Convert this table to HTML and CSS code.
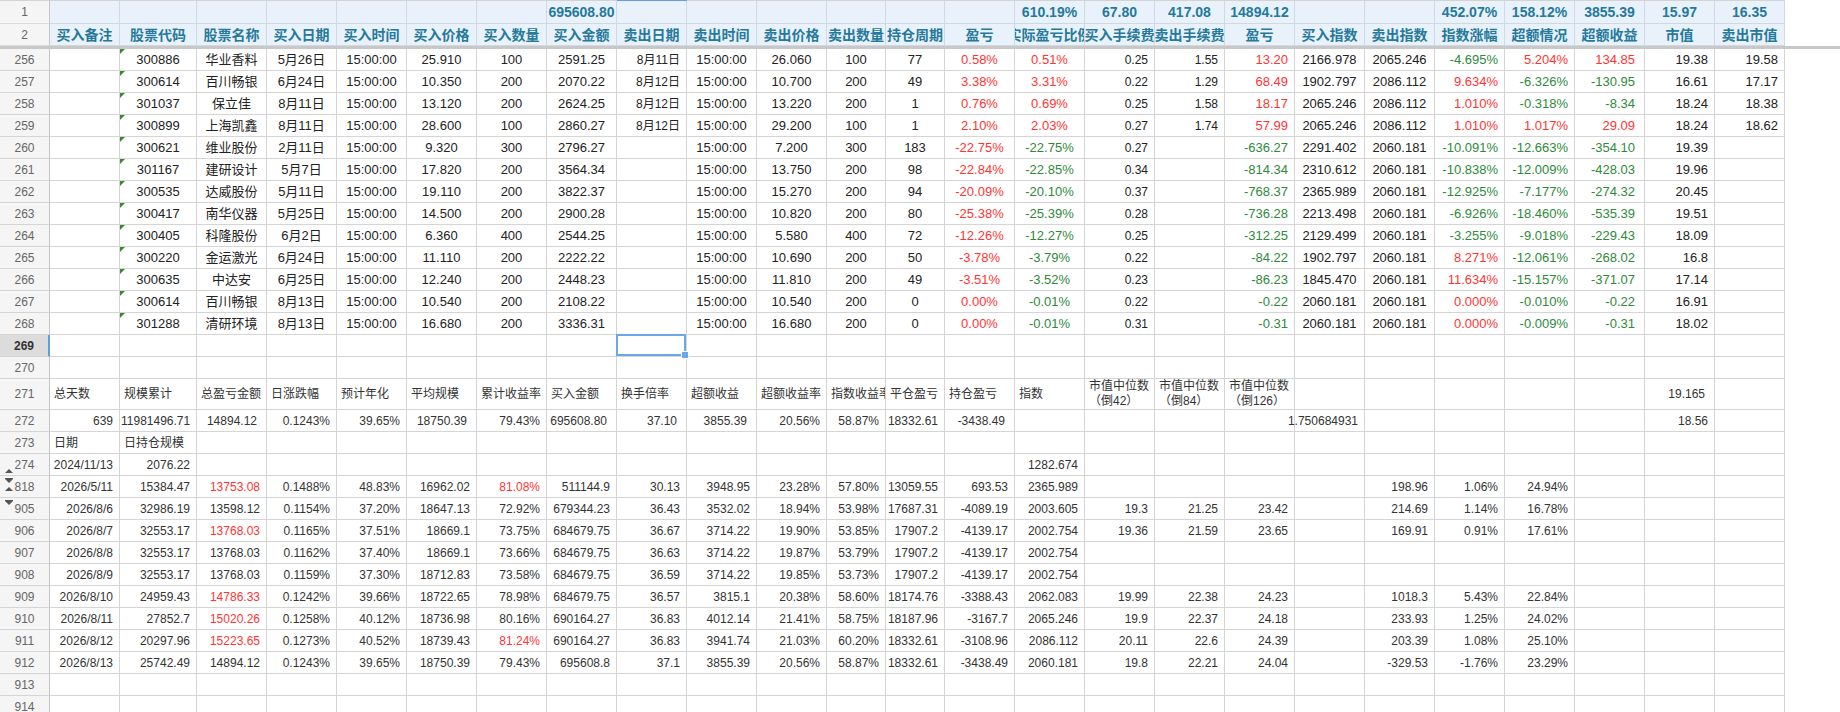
FILE: index.html
```html
<!DOCTYPE html>
<html lang="zh-CN">
<head>
<meta charset="utf-8">
<title>持仓记录</title>
<link rel="stylesheet" href="styles.css">
</head>
<body>
<div class="sheet">
<div class="row topline"><div></div><div></div><div></div><div></div><div></div><div></div><div></div><div></div><div></div><div class="on"></div><div></div><div></div><div></div><div></div><div></div><div></div><div></div><div></div><div></div><div></div><div></div><div></div><div></div><div></div><div></div><div></div></div>
<div class="row hd h1"><div class="rh">1</div><div></div><div></div><div></div><div></div><div></div><div></div><div></div><div>695608.80</div><div></div><div></div><div></div><div></div><div></div><div></div><div>610.19%</div><div>67.80</div><div>417.08</div><div>14894.12</div><div></div><div></div><div>452.07%</div><div>158.12%</div><div>3855.39</div><div>15.97</div><div>16.35</div></div>
<div class="row hd h2"><div class="rh">2</div><div>买入备注</div><div>股票代码</div><div>股票名称</div><div>买入日期</div><div>买入时间</div><div>买入价格</div><div>买入数量</div><div>买入金额</div><div>卖出日期</div><div>卖出时间</div><div>卖出价格</div><div>卖出数量</div><div>持仓周期</div><div>盈亏</div><div>实际盈亏比例</div><div>买入手续费</div><div>卖出手续费</div><div>盈亏</div><div>买入指数</div><div>卖出指数</div><div>指数涨幅</div><div>超额情况</div><div>超额收益</div><div>市值</div><div>卖出市值</div></div>
<div class="band"></div>

<div class="row"><div class="rh">256</div><div></div><div class="mk">300886</div><div>华业香料</div><div>5月26日</div><div>15:00:00</div><div>25.910</div><div>100</div><div>2591.25</div><div class="r s">8月11日</div><div>15:00:00</div><div>26.060</div><div>100</div><div>77</div><div class="red">0.58%</div><div class="red">0.51%</div><div class="r s">0.25</div><div class="r s">1.55</div><div class="r red">13.20</div><div>2166.978</div><div>2065.246</div><div class="r grn">-4.695%</div><div class="r red">5.204%</div><div class="r w red">134.85</div><div class="r">19.38</div><div class="r">19.58</div></div>
<div class="row"><div class="rh">257</div><div></div><div class="mk">300614</div><div>百川畅银</div><div>6月24日</div><div>15:00:00</div><div>10.350</div><div>200</div><div>2070.22</div><div class="r s">8月12日</div><div>15:00:00</div><div>10.700</div><div>200</div><div>49</div><div class="red">3.38%</div><div class="red">3.31%</div><div class="r s">0.22</div><div class="r s">1.29</div><div class="r red">68.49</div><div>1902.797</div><div>2086.112</div><div class="r red">9.634%</div><div class="r grn">-6.326%</div><div class="r w grn">-130.95</div><div class="r">16.61</div><div class="r">17.17</div></div>
<div class="row"><div class="rh">258</div><div></div><div class="mk">301037</div><div>保立佳</div><div>8月11日</div><div>15:00:00</div><div>13.120</div><div>200</div><div>2624.25</div><div class="r s">8月12日</div><div>15:00:00</div><div>13.220</div><div>200</div><div>1</div><div class="red">0.76%</div><div class="red">0.69%</div><div class="r s">0.25</div><div class="r s">1.58</div><div class="r red">18.17</div><div>2065.246</div><div>2086.112</div><div class="r red">1.010%</div><div class="r grn">-0.318%</div><div class="r w grn">-8.34</div><div class="r">18.24</div><div class="r">18.38</div></div>
<div class="row"><div class="rh">259</div><div></div><div class="mk">300899</div><div>上海凯鑫</div><div>8月11日</div><div>15:00:00</div><div>28.600</div><div>100</div><div>2860.27</div><div class="r s">8月12日</div><div>15:00:00</div><div>29.200</div><div>100</div><div>1</div><div class="red">2.10%</div><div class="red">2.03%</div><div class="r s">0.27</div><div class="r s">1.74</div><div class="r red">57.99</div><div>2065.246</div><div>2086.112</div><div class="r red">1.010%</div><div class="r red">1.017%</div><div class="r w red">29.09</div><div class="r">18.24</div><div class="r">18.62</div></div>
<div class="row"><div class="rh">260</div><div></div><div class="mk">300621</div><div>维业股份</div><div>2月11日</div><div>15:00:00</div><div>9.320</div><div>300</div><div>2796.27</div><div></div><div>15:00:00</div><div>7.200</div><div>300</div><div>183</div><div class="red">-22.75%</div><div class="grn">-22.75%</div><div class="r s">0.27</div><div></div><div class="r grn">-636.27</div><div>2291.402</div><div>2060.181</div><div class="r grn">-10.091%</div><div class="r grn">-12.663%</div><div class="r w grn">-354.10</div><div class="r">19.39</div><div></div></div>
<div class="row"><div class="rh">261</div><div></div><div class="mk">301167</div><div>建研设计</div><div>5月7日</div><div>15:00:00</div><div>17.820</div><div>200</div><div>3564.34</div><div></div><div>15:00:00</div><div>13.750</div><div>200</div><div>98</div><div class="red">-22.84%</div><div class="grn">-22.85%</div><div class="r s">0.34</div><div></div><div class="r grn">-814.34</div><div>2310.612</div><div>2060.181</div><div class="r grn">-10.838%</div><div class="r grn">-12.009%</div><div class="r w grn">-428.03</div><div class="r">19.96</div><div></div></div>
<div class="row"><div class="rh">262</div><div></div><div class="mk">300535</div><div>达威股份</div><div>5月11日</div><div>15:00:00</div><div>19.110</div><div>200</div><div>3822.37</div><div></div><div>15:00:00</div><div>15.270</div><div>200</div><div>94</div><div class="red">-20.09%</div><div class="grn">-20.10%</div><div class="r s">0.37</div><div></div><div class="r grn">-768.37</div><div>2365.989</div><div>2060.181</div><div class="r grn">-12.925%</div><div class="r grn">-7.177%</div><div class="r w grn">-274.32</div><div class="r">20.45</div><div></div></div>
<div class="row"><div class="rh">263</div><div></div><div class="mk">300417</div><div>南华仪器</div><div>5月25日</div><div>15:00:00</div><div>14.500</div><div>200</div><div>2900.28</div><div></div><div>15:00:00</div><div>10.820</div><div>200</div><div>80</div><div class="red">-25.38%</div><div class="grn">-25.39%</div><div class="r s">0.28</div><div></div><div class="r grn">-736.28</div><div>2213.498</div><div>2060.181</div><div class="r grn">-6.926%</div><div class="r grn">-18.460%</div><div class="r w grn">-535.39</div><div class="r">19.51</div><div></div></div>
<div class="row"><div class="rh">264</div><div></div><div class="mk">300405</div><div>科隆股份</div><div>6月2日</div><div>15:00:00</div><div>6.360</div><div>400</div><div>2544.25</div><div></div><div>15:00:00</div><div>5.580</div><div>400</div><div>72</div><div class="red">-12.26%</div><div class="grn">-12.27%</div><div class="r s">0.25</div><div></div><div class="r grn">-312.25</div><div>2129.499</div><div>2060.181</div><div class="r grn">-3.255%</div><div class="r grn">-9.018%</div><div class="r w grn">-229.43</div><div class="r">18.09</div><div></div></div>
<div class="row"><div class="rh">265</div><div></div><div class="mk">300220</div><div>金运激光</div><div>6月24日</div><div>15:00:00</div><div>11.110</div><div>200</div><div>2222.22</div><div></div><div>15:00:00</div><div>10.690</div><div>200</div><div>50</div><div class="red">-3.78%</div><div class="grn">-3.79%</div><div class="r s">0.22</div><div></div><div class="r grn">-84.22</div><div>1902.797</div><div>2060.181</div><div class="r red">8.271%</div><div class="r grn">-12.061%</div><div class="r w grn">-268.02</div><div class="r">16.8</div><div></div></div>
<div class="row"><div class="rh">266</div><div></div><div class="mk">300635</div><div>中达安</div><div>6月25日</div><div>15:00:00</div><div>12.240</div><div>200</div><div>2448.23</div><div></div><div>15:00:00</div><div>11.810</div><div>200</div><div>49</div><div class="red">-3.51%</div><div class="grn">-3.52%</div><div class="r s">0.23</div><div></div><div class="r grn">-86.23</div><div>1845.470</div><div>2060.181</div><div class="r red">11.634%</div><div class="r grn">-15.157%</div><div class="r w grn">-371.07</div><div class="r">17.14</div><div></div></div>
<div class="row"><div class="rh">267</div><div></div><div class="mk">300614</div><div>百川畅银</div><div>8月13日</div><div>15:00:00</div><div>10.540</div><div>200</div><div>2108.22</div><div></div><div>15:00:00</div><div>10.540</div><div>200</div><div>0</div><div class="red">0.00%</div><div class="grn">-0.01%</div><div class="r s">0.22</div><div></div><div class="r grn">-0.22</div><div>2060.181</div><div>2060.181</div><div class="r red">0.000%</div><div class="r grn">-0.010%</div><div class="r w grn">-0.22</div><div class="r">16.91</div><div></div></div>
<div class="row"><div class="rh">268</div><div></div><div class="mk">301288</div><div>清研环境</div><div>8月13日</div><div>15:00:00</div><div>16.680</div><div>200</div><div>3336.31</div><div></div><div>15:00:00</div><div>16.680</div><div>200</div><div>0</div><div class="red">0.00%</div><div class="grn">-0.01%</div><div class="r s">0.31</div><div></div><div class="r grn">-0.31</div><div>2060.181</div><div>2060.181</div><div class="r red">0.000%</div><div class="r grn">-0.009%</div><div class="r w grn">-0.31</div><div class="r">18.02</div><div></div></div>
<div class="row lo"><div class="rh cur">269</div><div></div><div></div><div></div><div></div><div></div><div></div><div></div><div></div><div class="sel"></div><div></div><div></div><div></div><div></div><div></div><div></div><div></div><div></div><div></div><div></div><div></div><div></div><div></div><div></div><div></div><div></div></div>
<div class="row lo"><div class="rh">270</div><div></div><div></div><div></div><div></div><div></div><div></div><div></div><div></div><div></div><div></div><div></div><div></div><div></div><div></div><div></div><div></div><div></div><div></div><div></div><div></div><div></div><div></div><div></div><div></div><div></div></div>
<div class="row lo tall"><div class="rh">271</div><div class="l">总天数</div><div class="l">规模累计</div><div class="l">总盈亏金额</div><div class="l">日涨跌幅</div><div class="l">预计年化</div><div class="l">平均规模</div><div class="l">累计收益率</div><div class="l">买入金额</div><div class="l">换手倍率</div><div class="l">超额收益</div><div class="l">超额收益率</div><div class="l">指数收益率</div><div class="l">平仓盈亏</div><div class="l">持仓盈亏</div><div class="l">指数</div><div class="l two">市值中位数<br>（倒42）</div><div class="l two">市值中位数<br>（倒84）</div><div class="l two">市值中位数<br>（倒126）</div><div></div><div></div><div></div><div></div><div></div><div class="p10">19.165</div><div></div></div>
<div class="row lo"><div class="rh">272</div><div>639</div><div class="ov">11981496.71</div><div class="p10">14894.12</div><div>0.1243%</div><div>39.65%</div><div class="p10">18750.39</div><div>79.43%</div><div class="p10">695608.80</div><div class="p10">37.10</div><div class="p10">3855.39</div><div>20.56%</div><div>58.87%</div><div>18332.61</div><div class="p10">-3438.49</div><div></div><div></div><div></div><div></div><div class="spill">1.750684931</div><div></div><div></div><div></div><div></div><div>18.56</div><div></div></div>
<div class="row lo"><div class="rh">273</div><div class="l">日期</div><div class="l">日持仓规模</div><div></div><div></div><div></div><div></div><div></div><div></div><div></div><div></div><div></div><div></div><div></div><div></div><div></div><div></div><div></div><div></div><div></div><div></div><div></div><div></div><div></div><div></div><div></div></div>
<div class="row lo"><div class="rh"><span class="up g274"></span>274</div><div>2024/11/13</div><div>2076.22</div><div></div><div></div><div></div><div></div><div></div><div></div><div></div><div></div><div></div><div></div><div></div><div></div><div>1282.674</div><div></div><div></div><div></div><div></div><div></div><div></div><div></div><div></div><div></div><div></div></div>
<div class="row lo"><div class="rh"><span class="bar b818"></span><span class="dn d818"></span><span class="up u818"></span>818</div><div>2026/5/11</div><div>15384.47</div><div class="red">13753.08</div><div>0.1488%</div><div>48.83%</div><div>16962.02</div><div class="red">81.08%</div><div>511144.9</div><div>30.13</div><div>3948.95</div><div>23.28%</div><div>57.80%</div><div>13059.55</div><div>693.53</div><div>2365.989</div><div></div><div></div><div></div><div></div><div>198.96</div><div>1.06%</div><div>24.94%</div><div></div><div></div><div></div></div>
<div class="row lo"><div class="rh"><span class="bar b905"></span><span class="dn d905"></span>905</div><div>2026/8/6</div><div>32986.19</div><div>13598.12</div><div>0.1154%</div><div>37.20%</div><div>18647.13</div><div>72.92%</div><div>679344.23</div><div>36.43</div><div>3532.02</div><div>18.94%</div><div>53.98%</div><div>17687.31</div><div>-4089.19</div><div>2003.605</div><div>19.3</div><div>21.25</div><div>23.42</div><div></div><div>214.69</div><div>1.14%</div><div>16.78%</div><div></div><div></div><div></div></div>
<div class="row lo"><div class="rh">906</div><div>2026/8/7</div><div>32553.17</div><div class="red">13768.03</div><div>0.1165%</div><div>37.51%</div><div>18669.1</div><div>73.75%</div><div>684679.75</div><div>36.67</div><div>3714.22</div><div>19.90%</div><div>53.85%</div><div>17907.2</div><div>-4139.17</div><div>2002.754</div><div>19.36</div><div>21.59</div><div>23.65</div><div></div><div>169.91</div><div>0.91%</div><div>17.61%</div><div></div><div></div><div></div></div>
<div class="row lo"><div class="rh">907</div><div>2026/8/8</div><div>32553.17</div><div>13768.03</div><div>0.1162%</div><div>37.40%</div><div>18669.1</div><div>73.66%</div><div>684679.75</div><div>36.63</div><div>3714.22</div><div>19.87%</div><div>53.79%</div><div>17907.2</div><div>-4139.17</div><div>2002.754</div><div></div><div></div><div></div><div></div><div></div><div></div><div></div><div></div><div></div><div></div></div>
<div class="row lo"><div class="rh">908</div><div>2026/8/9</div><div>32553.17</div><div>13768.03</div><div>0.1159%</div><div>37.30%</div><div>18712.83</div><div>73.58%</div><div>684679.75</div><div>36.59</div><div>3714.22</div><div>19.85%</div><div>53.73%</div><div>17907.2</div><div>-4139.17</div><div>2002.754</div><div></div><div></div><div></div><div></div><div></div><div></div><div></div><div></div><div></div><div></div></div>
<div class="row lo"><div class="rh">909</div><div>2026/8/10</div><div>24959.43</div><div class="red">14786.33</div><div>0.1242%</div><div>39.66%</div><div>18722.65</div><div>78.98%</div><div>684679.75</div><div>36.57</div><div>3815.1</div><div>20.38%</div><div>58.60%</div><div>18174.76</div><div>-3388.43</div><div>2062.083</div><div>19.99</div><div>22.38</div><div>24.23</div><div></div><div>1018.3</div><div>5.43%</div><div>22.84%</div><div></div><div></div><div></div></div>
<div class="row lo"><div class="rh">910</div><div>2026/8/11</div><div>27852.7</div><div class="red">15020.26</div><div>0.1258%</div><div>40.12%</div><div>18736.98</div><div>80.16%</div><div>690164.27</div><div>36.83</div><div>4012.14</div><div>21.41%</div><div>58.75%</div><div>18187.96</div><div>-3167.7</div><div>2065.246</div><div>19.9</div><div>22.37</div><div>24.18</div><div></div><div>233.93</div><div>1.25%</div><div>24.02%</div><div></div><div></div><div></div></div>
<div class="row lo"><div class="rh">911</div><div>2026/8/12</div><div>20297.96</div><div class="red">15223.65</div><div>0.1273%</div><div>40.52%</div><div>18739.43</div><div class="red">81.24%</div><div>690164.27</div><div>36.83</div><div>3941.74</div><div>21.03%</div><div>60.20%</div><div>18332.61</div><div>-3108.96</div><div>2086.112</div><div>20.11</div><div>22.6</div><div>24.39</div><div></div><div>203.39</div><div>1.08%</div><div>25.10%</div><div></div><div></div><div></div></div>
<div class="row lo"><div class="rh">912</div><div>2026/8/13</div><div>25742.49</div><div>14894.12</div><div>0.1243%</div><div>39.65%</div><div>18750.39</div><div>79.43%</div><div>695608.8</div><div>37.1</div><div>3855.39</div><div>20.56%</div><div>58.87%</div><div>18332.61</div><div>-3438.49</div><div>2060.181</div><div>19.8</div><div>22.21</div><div>24.04</div><div></div><div>-329.53</div><div>-1.76%</div><div>23.29%</div><div></div><div></div><div></div></div>
<div class="row lo"><div class="rh">913</div><div></div><div></div><div></div><div></div><div></div><div></div><div></div><div></div><div></div><div></div><div></div><div></div><div></div><div></div><div></div><div></div><div></div><div></div><div></div><div></div><div></div><div></div><div></div><div></div><div></div></div>
<div class="row lo"><div class="rh">914</div><div></div><div></div><div></div><div></div><div></div><div></div><div></div><div></div><div></div><div></div><div></div><div></div><div></div><div></div><div></div><div></div><div></div><div></div><div></div><div></div><div></div><div></div><div></div><div></div><div></div></div>
</div>
</body>
</html>
```

FILE: styles.css
```css
* { box-sizing: border-box; margin: 0; padding: 0; }
html, body { width: 1840px; height: 712px; overflow: hidden; background: #fff; }
body { font-family: "Liberation Sans", "Noto Sans CJK SC", sans-serif; color: #222; }

.sheet { display: flex; flex-direction: column; width: 1840px; }

.row {
  display: grid;
  grid-template-columns: 50px 70px 77px 70px 70px 70px 70px 70px 70px 70px 70px 70px 59px 59px 70px 70px 70px 70px 70px 70px 70px 70px 70px 70px 70px 70px;
  height: 22px;
  flex: none;
}
.row > div {
  border-right: 1px solid #d5d5d5;
  border-bottom: 1px solid #d5d5d5;
  overflow: hidden;
  white-space: nowrap;
  display: flex;
  align-items: center;
  justify-content: center;
  padding: 0 6px;
  font-size: 13px;
  line-height: 16px;
}

/* top strip (edge of hidden column header) */
.topline { height: 1px; }
.row.topline > div { border: 0; background: #d3d3d3; padding: 0; }
.row.topline > div.on { background: #5f9ee6; }

/* header rows */
.hd.h1 { height: 23px; }
.hd.h2 { height: 22px; }
.row.hd > div {
  background: #e9f2fb;
  border-color: #cfd9e4;
  color: #25799b;
  font-weight: bold;
  font-size: 14px;
  padding: 0;
}
.row.hd > div.rh { background: #f5f5f5; color: #666; font-weight: normal; font-size: 12px; border-right-color: #c6c6c6; border-bottom-color: #dcdcdc; }
.band { height: 3px; width: 1840px; background: #c8c8c8; flex: none; }

/* row headers */
.row > div.rh {
  background: #f5f5f5;
  color: #666;
  font-size: 12px;
  padding: 0;
  border-right-color: #c4c4c4;
  position: relative;
}
.row > div.rh.cur { background: #dcdcdc; color: #333; font-weight: bold; border-right: 2px solid #5c9de4; }

/* alignment helpers (top table) */
.row > div.r { justify-content: flex-end; padding: 0 6px 0 2px; }
.row > div.w { padding-right: 9px; }
.row > div.s { font-size: 12px; }
.red { color: #ff3434; }
.grn { color: #2e8a3a; }

/* text-number marker */
.row > div.mk { position: relative; }
.mk::before {
  content: "";
  position: absolute;
  left: 0;
  top: 0;
  border-top: 5px solid #3a8a30;
  border-right: 5px solid transparent;
}

/* lower block */
.row.lo > div { font-size: 12px; color: #333; justify-content: flex-end; padding: 0 6px 0 2px; }
.row.lo > div.red { color: #ff3434; }
.row.lo > div.l { justify-content: flex-start; padding: 0 0 0 4px; }
.row.lo > div.two { line-height: 15px; white-space: nowrap; }
.row.lo > div.p10 { padding-right: 9px; }
.row.lo > div.ov { justify-content: flex-start; padding: 0 0 0 1px; }
.row.lo > div.spill { overflow: visible; padding: 0 6px 0 0; }
.row.lo > div.rh { justify-content: center; padding: 0; color: #666; }
.row.lo > div.rh.cur { color: #333; }
.row.tall { height: 31px; }

/* selected cell */
.row > div.sel { overflow: visible; position: relative; }
.sel::after {
  content: "";
  position: absolute;
  left: -1px;
  top: -1px;
  right: 0;
  bottom: 0;
  border: 2px solid #6aa8ea;
}
.sel::before {
  content: "";
  position: absolute;
  right: -3px;
  bottom: -3px;
  width: 6px;
  height: 6px;
  background: #6aa8ea;
  border: 1px solid #fff;
  z-index: 2;
}

/* row group markers */
.up, .dn, .bar { position: absolute; left: 5px; width: 0; height: 0; }
.up { border-left: 4px solid transparent; border-right: 4px solid transparent; border-bottom: 4px solid #555; }
.dn { border-left: 4px solid transparent; border-right: 4px solid transparent; border-top: 4px solid #555; }
.bar { width: 8px; height: 1px; background: #555; }
.g274 { top: 15px; }
.b818 { top: 2px; }
.d818 { top: 3px; }
.u818 { top: 11px; }
.b905 { top: 2px; }
.d905 { top: 3px; }
```
